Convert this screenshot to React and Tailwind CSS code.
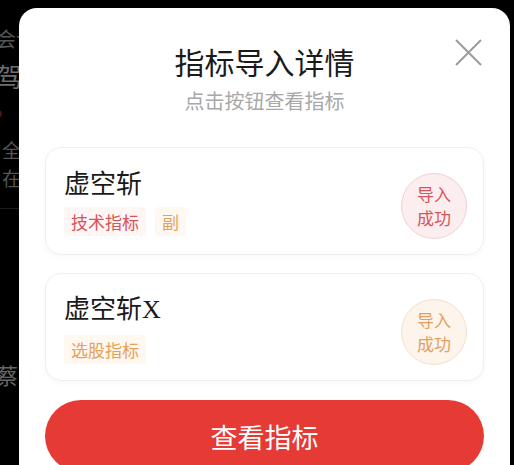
import { useState } from 'react';

const FONT = { fontFamily: '"Noto Sans CJK SC", "Noto Sans", sans-serif' };

const indicators = [
    {
        name: '虚空斩',
        suffix: '',
        tags: [
            { label: '技术指标', tone: 'red' },
            { label: '副', tone: 'orange' },
        ],
        tone: 'red',
    },
    {
        name: '虚空斩',
        suffix: 'X',
        tags: [{ label: '选股指标', tone: 'orange' }],
        tone: 'orange',
    },
];

const tagClass = {
    red: 'bg-[#fef5f5] text-[#d5545a]',
    orange: 'bg-[#fef8f1] text-[#e5a159]',
};

const badgeClass = {
    red: 'bg-[#fcedef] border-[#f0d2d5] text-[#d6555b]',
    orange: 'bg-[#fdf4eb] border-[#f2e0cd] text-[#e3a05c]',
};

const IndicatorCard = ({ item }) => (
    <div className="flex items-center justify-between h-[108px] rounded-[16px] border border-[#efefef] bg-white pl-[18px] pr-[16px] shadow-[0_2px_6px_rgba(0,0,0,0.03)]">
        <div className="flex flex-col">
            <div className="text-[26px] leading-[32px] text-[#1a1a1a]">
                {item.name}
                {item.suffix && (
                    <span style={{ fontFamily: '"Liberation Serif", serif' }}>{item.suffix}</span>
                )}
            </div>
            <div className="flex gap-[9px] mt-[9px]">
                {item.tags.map((tag, i) => (
                    <span
                        key={i}
                        className={`h-[29px] px-[7px] flex items-center text-[17px] leading-none rounded-[4px] ${tagClass[tag.tone]}`}
                    >
                        {tag.label}
                    </span>
                ))}
            </div>
        </div>
        {/* Import status badge */}
        <div
            className={`mt-[10px] w-[66px] h-[66px] rounded-full border flex flex-col items-center justify-center text-[17px] leading-[24px] ${badgeClass[item.tone]}`}
        >
            <span>导入</span>
            <span>成功</span>
        </div>
    </div>
);

const App = () => {
    const [open, setOpen] = useState(true);

    return (
        <div className="relative w-[514px] h-[465px] bg-black overflow-hidden" style={FONT}>
            {/* Dimmed page behind the dialog */}
            <div className="flex flex-col text-[#555] -ml-[4px] pt-[24px]">
                <span className="text-[20px] leading-[30px]">会计</span>
                <span className="text-[26px] leading-[40px] text-[#6e6e6e] mt-[2px]">驾</span>
                <span className="w-[8px] h-[8px] rounded-full bg-[#4a1414] ml-[-2px] mt-[14px]"></span>
                <span className="text-[19px] leading-[28px] ml-[6px] mt-[18px]">全</span>
                <span className="text-[19px] leading-[28px] ml-[6px]">在</span>
                <span className="h-px w-[30px] bg-[#1c1c1c] mt-[16px]"></span>
                <span className="text-[22px] leading-[30px] text-[#666] mt-[150px]">蔡</span>
            </div>

            {open && (
                <div className="absolute left-[19px] top-[8px] w-[491px] h-[480px] rounded-t-[18px] bg-white px-[26px] pt-[35px]">
                    <button
                        onClick={() => setOpen(false)}
                        className="absolute right-[28px] top-[31px] w-[27px] h-[27px]"
                    >
                        <svg viewBox="0 0 27 27" className="w-[27px] h-[27px]">
                            <path d="M1 1 L26 26 M26 1 L1 26" stroke="#9b9b9b" strokeWidth="2" fill="none" />
                        </svg>
                    </button>

                    <h2 className="text-center text-[30px] leading-[36px] text-[#1a1a1a]">指标导入详情</h2>
                    <p className="text-center text-[20px] leading-[26px] text-[#a8a8a8] mt-[9px]">点击按钮查看指标</p>

                    <div className="flex flex-col gap-[18px] mt-[33px]">
                        {indicators.map((item, idx) => (
                            <IndicatorCard key={idx} item={item} />
                        ))}
                    </div>

                    <button className="mt-[19px] w-full h-[72px] rounded-full bg-[#e53b34] text-white text-[27px] leading-none">
                        查看指标
                    </button>
                </div>
            )}
        </div>
    );
};

export default App;
